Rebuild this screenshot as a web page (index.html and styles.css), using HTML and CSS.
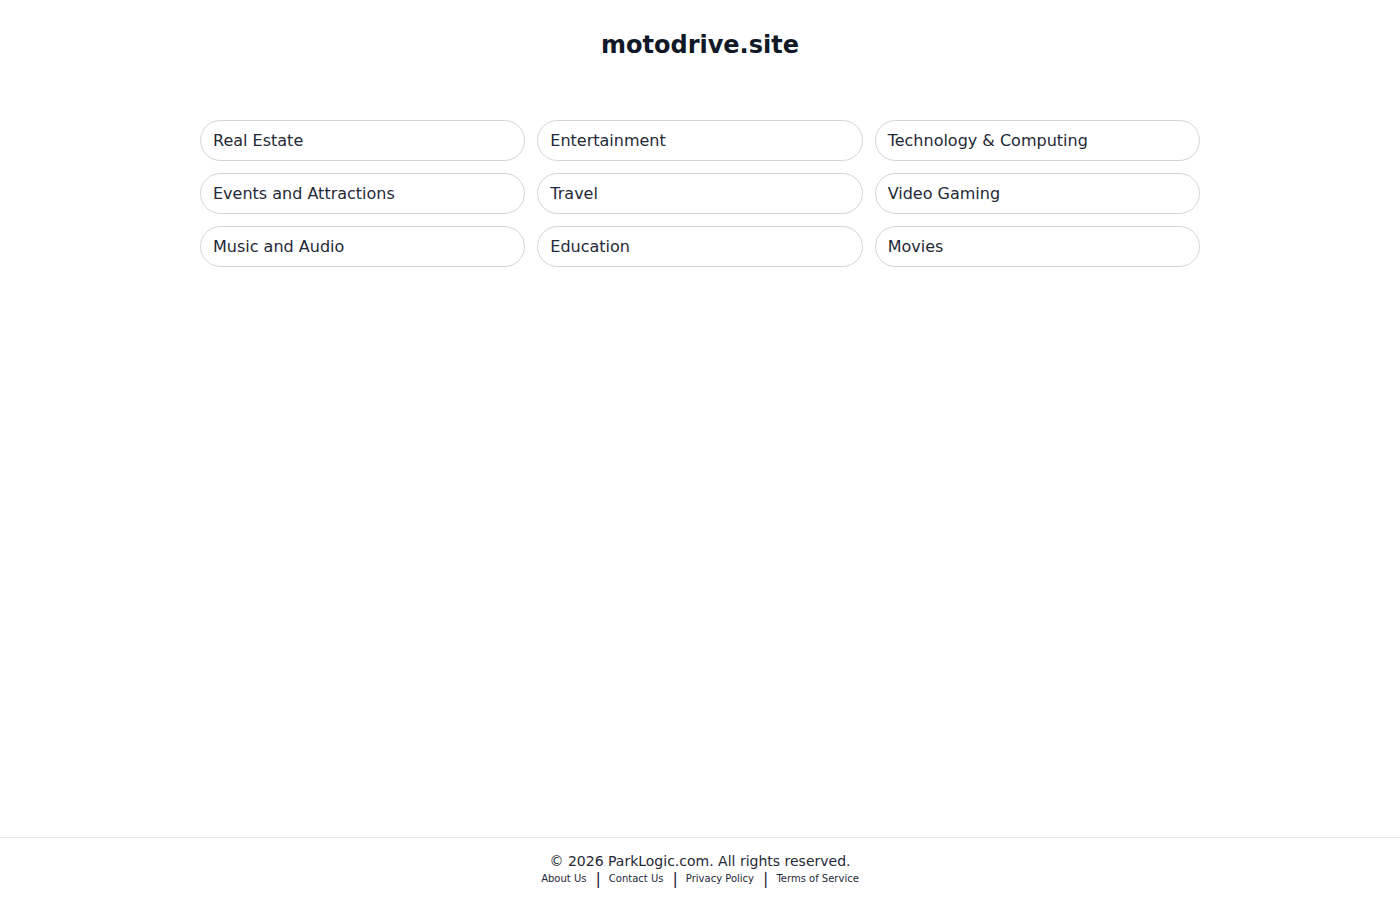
FILE: index.html
```html
<!DOCTYPE html>
<html lang="en">
<head>
<meta charset="utf-8">
<title>motodrive.site</title>
<link rel="stylesheet" href="styles.css">
</head>
<body>
<main class="main">
  <h1 class="title">motodrive.site</h1>
  <div class="grid">
    <a class="pill" href="#">Real Estate</a>
    <a class="pill" href="#">Entertainment</a>
    <a class="pill" href="#">Technology &amp; Computing</a>
    <a class="pill" href="#">Events and Attractions</a>
    <a class="pill" href="#">Travel</a>
    <a class="pill" href="#">Video Gaming</a>
    <a class="pill" href="#">Music and Audio</a>
    <a class="pill" href="#">Education</a>
    <a class="pill" href="#">Movies</a>
  </div>
</main>
<footer class="footer">
  <div class="copy">© 2026 ParkLogic.com. All rights reserved.</div>
  <div class="links">
    <a href="#">About Us</a><span class="sep">|</span><a href="#">Contact Us</a><span class="sep">|</span><a href="#">Privacy Policy</a><span class="sep">|</span><a href="#">Terms of Service</a>
  </div>
</footer>
</body>
</html>
```
FILE: styles.css
```css
html, body {
  margin: 0;
  padding: 0;
}
body {
  font-family: "DejaVu Sans", Verdana, sans-serif;
  color: #1f2937;
  background: #ffffff;
  min-height: 100vh;
  display: flex;
  flex-direction: column;
}
.main {
  flex: 1;
  display: flex;
  flex-direction: column;
  align-items: center;
  padding-top: 31px;
}
.title {
  margin: 0;
  font-size: 24px;
  line-height: 28px;
  font-weight: bold;
  color: #111827;
}
.grid {
  margin-top: 61px;
  width: 1000px;
  display: grid;
  grid-template-columns: repeat(3, 1fr);
  gap: 12px;
}
.pill {
  display: block;
  border: 1px solid #d1d5db;
  border-radius: 9999px;
  padding: 10px 12px;
  font-size: 16px;
  line-height: 19px;
  color: #1f2937;
  text-decoration: none;
}
.footer {
  border-top: 1px solid #e5e7eb;
  padding: 15px 0 13px;
  text-align: center;
}
.copy {
  font-size: 14px;
  line-height: 17px;
  color: #1f2937;
}
.links {
  padding-top: 1px;
  font-size: 10px;
  line-height: 16px;
  display: flex;
  justify-content: center;
  align-items: center;
}
.links a {
  color: #1f2937;
  text-decoration: none;
}
.sep {
  font-size: 16px;
  line-height: 16px;
  margin: 0 8px 0 9px;
  color: #1f2937;
}
```
